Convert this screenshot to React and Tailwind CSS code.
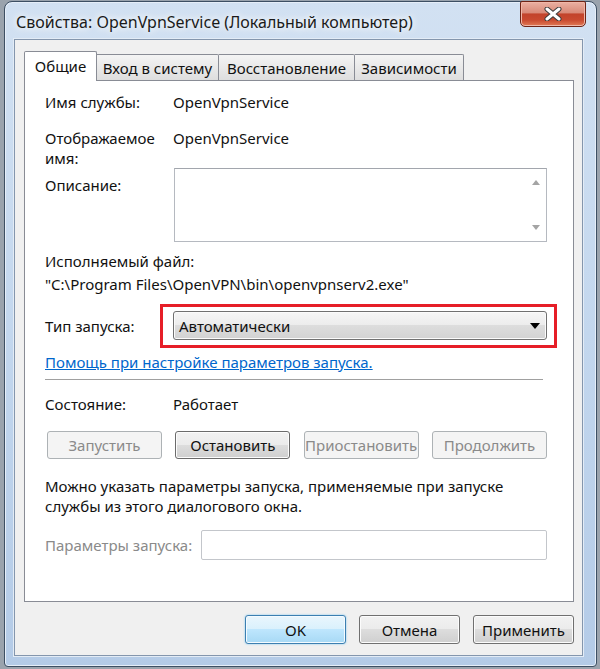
export default function App() {
  return (
    <div className="w-[600px] h-[669px] overflow-hidden bg-[#9aa3ad] pt-[1px] font-['Noto_Sans',sans-serif] text-[15px] leading-[18px] text-[#111]">
      <div className="relative ml-[4px] w-[593px] h-[666px] flex flex-col rounded-t-[8px] rounded-b-[4px] border border-[#3d4f63] bg-linear-to-b from-[#d2e1f2] via-[#c3d7ee] to-[#b4cbe7] shadow-[inset_0_0_0_1px_#e6eef8]">
        {/* title bar */}
        <div className="h-[37px] pl-[11px] pt-[3px] flex items-center text-[16px] text-[#1a1a1a] [text-shadow:0_0_6px_#ffffff,0_0_10px_#ffffff]">
          Свойства: OpenVpnService (Локальный компьютер)
        </div>
        {/* close button */}
        <div className="absolute top-[-1px] right-[10px] w-[66px] h-[26px] rounded-b-[5px] rounded-t-[2px] border border-[#6e2416] bg-[linear-gradient(#eab0a2,#d98a78_45%,#c2432b_50%,#c94a30_75%,#e07a56)] shadow-[inset_0_0_0_1px_#f0b7a8] flex items-center justify-center">
          <svg width="18" height="14" viewBox="0 0 18 14">
            <path d="M3 2 L15 12 M15 2 L3 12" stroke="#3b3b3b" strokeWidth="5" strokeLinecap="round" />
            <path d="M3 2 L15 12 M15 2 L3 12" stroke="#ffffff" strokeWidth="3" strokeLinecap="round" />
          </svg>
        </div>

        {/* content */}
        <div className="ml-[9px] w-[569px] h-[617px] border border-[#8496ad] bg-[#f0f0f0] shadow-[0_0_0_1px_#e3ecf6] pt-[11px] pl-[9px] pr-[8px]">
          {/* tabs */}
          <div className="relative z-10 -mb-px flex items-end h-[30px]">
            <div className="w-[73px] h-[30px] bg-white border border-b-0 border-[#898c95] rounded-t-[2px] flex items-center justify-center pb-[1px]">
              Общие
            </div>
            <div className="w-[122px] h-[26px] mb-px border border-l-0 border-b-0 border-[#898c95] rounded-tr-[2px] bg-linear-to-b from-[#f4f4f4] to-[#dedede] flex items-center justify-center">
              Вход в систему
            </div>
            <div className="w-[136px] h-[26px] mb-px border border-l-0 border-b-0 border-[#898c95] rounded-tr-[2px] bg-linear-to-b from-[#f4f4f4] to-[#dedede] flex items-center justify-center">
              Восстановление
            </div>
            <div className="w-[109px] h-[26px] mb-px border border-l-0 border-b-0 border-[#898c95] rounded-tr-[2px] bg-linear-to-b from-[#f4f4f4] to-[#dedede] flex items-center justify-center">
              Зависимости
            </div>
          </div>

          {/* tab page */}
          <div className="h-[522px] border border-[#898c95] bg-white pt-[12px] pl-[20px] pr-[26px]">
            <div className="flex">
              <div className="w-[128px]">Имя службы:</div>
              <div>OpenVpnService</div>
            </div>

            <div className="flex mt-[17px]">
              <div className="w-[128px] leading-[20px]">
                Отображаемое
                <br />
                имя:
              </div>
              <div className="leading-[20px]">OpenVpnService</div>
            </div>

            <div className="flex">
              <div className="w-[128px] pt-[8px]">Описание:</div>
              <div className="flex-1 ml-[1px] h-[74px] border border-[#b5b9c0] border-t-[#a2a6ad] bg-white flex justify-end">
                <div className="w-[20px] flex flex-col items-center justify-between py-[11px]">
                  <svg width="8" height="5" viewBox="0 0 8 5">
                    <path d="M0 5 L4 0 L8 5Z" fill="#a4a4a4" />
                  </svg>
                  <svg width="8" height="5" viewBox="0 0 8 5">
                    <path d="M0 0 L4 5 L8 0Z" fill="#a4a4a4" />
                  </svg>
                </div>
              </div>
            </div>

            <div className="mt-[10px]">Исполняемый файл:</div>
            <div className="mt-[5px]">"C:\Program Files\OpenVPN\bin\openvpnserv2.exe"</div>

            <div className="flex items-center mt-[11px]">
              <div className="w-[115px]">Тип запуска:</div>
              <div className="flex-1 -mr-[10px] border-[3px] border-[#e61e28] pl-[10px] pr-[7px] pt-[4px] pb-[5px]">
                <div className="h-[29px] rounded-[3px] border border-[#707070] bg-[linear-gradient(#f6f6f6,#ececec_50%,#dddddd_50%,#d2d2d2)] shadow-[inset_0_0_0_1px_#fbfbfb] flex items-center justify-between pl-[5px] pr-[6px]">
                  <span>Автоматически</span>
                  <svg width="10" height="6" viewBox="0 0 10 6">
                    <path d="M0 0 L10 0 L5 6Z" fill="#000" />
                  </svg>
                </div>
              </div>
            </div>

            <div className="mt-[5px] text-[#0066cc] underline">Помощь при настройке параметров запуска.</div>

            <div className="mt-[8px] mr-[4px] h-[2px] border-t border-[#a0a0a0] border-b border-b-white"></div>

            <div className="flex mt-[14px]">
              <div className="w-[128px]">Состояние:</div>
              <div>Работает</div>
            </div>

            <div className="flex justify-between ml-[2px] mt-[18px]">
              <div className="w-[115px] h-[28px] rounded-[3px] border border-[#adb2b5] bg-[#f4f4f4] text-[#8a8a8a] flex items-center justify-center">
                Запустить
              </div>
              <div className="w-[115px] h-[28px] rounded-[3px] border border-[#6b6b6b] bg-[linear-gradient(#f2f2f2,#ebebeb_50%,#dddddd_50%,#cfcfcf)] shadow-[inset_0_0_0_1px_#fcfcfc] flex items-center justify-center">
                Остановить
              </div>
              <div className="w-[115px] h-[28px] rounded-[3px] border border-[#adb2b5] bg-[#f4f4f4] text-[#8a8a8a] flex items-center justify-center">
                Приостановить
              </div>
              <div className="w-[115px] h-[28px] rounded-[3px] border border-[#adb2b5] bg-[#f4f4f4] text-[#8a8a8a] flex items-center justify-center">
                Продолжить
              </div>
            </div>

            <div className="mt-[17px] leading-[20px]">
              Можно указать параметры запуска, применяемые при запуске
              <br />
              службы из этого диалогового окна.
            </div>

            <div className="flex items-center mt-[14px]">
              <div className="w-[156px] text-[#8a8a8a]">Параметры запуска:</div>
              <div className="flex-1 h-[30px] border border-[#c3c6cb] rounded-[2px] bg-white"></div>
            </div>
          </div>

          {/* dialog buttons */}
          <div className="flex justify-end gap-[13px] mt-[13px]">
            <div className="w-[101px] h-[29px] rounded-[3px] border border-[#3c7fb1] bg-[linear-gradient(#eaf6fd,#d9f0fc_50%,#bee6fd_50%,#a7d9f5)] shadow-[inset_0_0_0_1px_#f4fbff,0_0_2px_#6fc3f0] flex items-center justify-center">
              OK
            </div>
            <div className="w-[101px] h-[29px] rounded-[3px] border border-[#707070] bg-[linear-gradient(#f2f2f2,#ebebeb_50%,#dddddd_50%,#cfcfcf)] shadow-[inset_0_0_0_1px_#fcfcfc] flex items-center justify-center">
              Отмена
            </div>
            <div className="w-[101px] h-[29px] rounded-[3px] border border-[#707070] bg-[linear-gradient(#f2f2f2,#ebebeb_50%,#dddddd_50%,#cfcfcf)] shadow-[inset_0_0_0_1px_#fcfcfc] flex items-center justify-center">
              Применить
            </div>
          </div>
        </div>
      </div>
    </div>
  );
}
